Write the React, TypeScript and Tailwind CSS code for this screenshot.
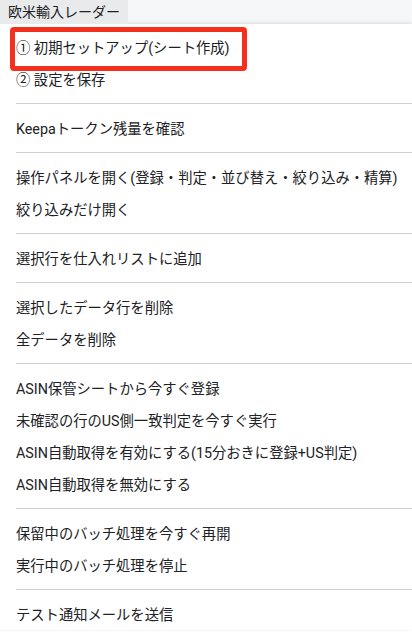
const font = "font-['Roboto','Noto_Sans_CJK_JP',sans-serif]"

type Group = string[]

const groups: Group[] = [
  ["① 初期セットアップ(シート作成)", "② 設定を保存"],
  ["Keepaトークン残量を確認"],
  ["操作パネルを開く(登録・判定・並び替え・絞り込み・精算)", "絞り込みだけ開く"],
  ["選択行を仕入れリストに追加"],
  ["選択したデータ行を削除", "全データを削除"],
  [
    "ASIN保管シートから今すぐ登録",
    "未確認の行のUS側一致判定を今すぐ実行",
    "ASIN自動取得を有効にする(15分おきに登録+US判定)",
    "ASIN自動取得を無効にする",
  ],
  ["保留中のバッチ処理を今すぐ再開", "実行中のバッチ処理を停止"],
  ["テスト通知メールを送信"],
]

function MenuItem({ label, highlighted }: { label: string; highlighted?: boolean }) {
  return (
    <div className="relative flex h-8 items-center pl-4 pt-[3px] text-[14.3px] text-[#202124]">
      {highlighted ? (
        <div className="absolute left-[10px] top-[-4px] h-[44px] w-[237px] rounded-[4px] border-[5px] border-[#f3301d]" />
      ) : null}
      <span className="relative whitespace-nowrap">{label}</span>
    </div>
  )
}

export default function App() {
  return (
    <div className={`h-[637px] w-[412px] overflow-hidden bg-white ${font}`}>
      <div className="flex h-6 bg-[#f6f7f8]">
        <div className="flex h-6 w-[128px] items-center bg-[#e9eaeb] px-2 text-[14px] text-[#202124]">
          欧米輸入レーダー
        </div>
      </div>

      <div className="bg-white pt-[7px] shadow-[0_-1px_4px_rgba(0,0,0,0.12)]">
        {groups.map((group, gi) => (
          <div key={gi}>
            {gi > 0 ? <div className="my-2 ml-4 h-px bg-[#d0d0d0]" /> : null}
            {group.map((label, i) => (
              <MenuItem key={label} label={label} highlighted={gi === 0 && i === 0} />
            ))}
          </div>
        ))}
      </div>
    </div>
  )
}
